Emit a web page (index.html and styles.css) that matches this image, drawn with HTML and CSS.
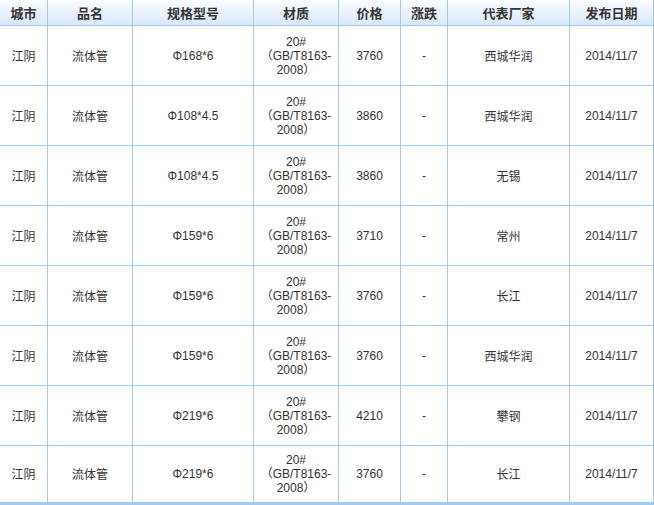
FILE: index.html
```html
<!DOCTYPE html>
<html lang="zh">
<head>
<meta charset="utf-8">
<title>流体管价格</title>
<link rel="stylesheet" href="styles.css">
</head>
<body>
<table class="price-table">
  <colgroup>
    <col class="c-city"><col class="c-name"><col class="c-spec"><col class="c-mat">
    <col class="c-price"><col class="c-chg"><col class="c-maker"><col class="c-date">
  </colgroup>
  <thead>
    <tr class="head-row">
      <th>城市</th><th>品名</th><th>规格型号</th><th>材质</th><th>价格</th><th>涨跌</th><th>代表厂家</th><th>发布日期</th>
    </tr>
  </thead>
  <tbody>
    <tr><td>江阴</td><td>流体管</td><td class="num">Φ168*6</td><td class="num mat">20#<br>（GB/T8163-<br>2008）</td><td class="num">3760</td><td class="num">-</td><td>西城华润</td><td class="num">2014/11/7</td></tr>
    <tr><td>江阴</td><td>流体管</td><td class="num">Φ108*4.5</td><td class="num mat">20#<br>（GB/T8163-<br>2008）</td><td class="num">3860</td><td class="num">-</td><td>西城华润</td><td class="num">2014/11/7</td></tr>
    <tr><td>江阴</td><td>流体管</td><td class="num">Φ108*4.5</td><td class="num mat">20#<br>（GB/T8163-<br>2008）</td><td class="num">3860</td><td class="num">-</td><td>无锡</td><td class="num">2014/11/7</td></tr>
    <tr><td>江阴</td><td>流体管</td><td class="num">Φ159*6</td><td class="num mat">20#<br>（GB/T8163-<br>2008）</td><td class="num">3710</td><td class="num">-</td><td>常州</td><td class="num">2014/11/7</td></tr>
    <tr><td>江阴</td><td>流体管</td><td class="num">Φ159*6</td><td class="num mat">20#<br>（GB/T8163-<br>2008）</td><td class="num">3760</td><td class="num">-</td><td>长江</td><td class="num">2014/11/7</td></tr>
    <tr><td>江阴</td><td>流体管</td><td class="num">Φ159*6</td><td class="num mat">20#<br>（GB/T8163-<br>2008）</td><td class="num">3760</td><td class="num">-</td><td>西城华润</td><td class="num">2014/11/7</td></tr>
    <tr><td>江阴</td><td>流体管</td><td class="num">Φ219*6</td><td class="num mat">20#<br>（GB/T8163-<br>2008）</td><td class="num">4210</td><td class="num">-</td><td>攀钢</td><td class="num">2014/11/7</td></tr>
    <tr class="last"><td>江阴</td><td>流体管</td><td class="num">Φ219*6</td><td class="num mat">20#<br>（GB/T8163-<br>2008）</td><td class="num">3760</td><td class="num">-</td><td>长江</td><td class="num">2014/11/7</td></tr>
  </tbody>
</table>
</body>
</html>
```
FILE: styles.css
```css
html, body {
  margin: 0;
  padding: 0;
  background: #ffffff;
}

.price-table {
  width: 654px;
  table-layout: fixed;
  border-collapse: separate;
  border-spacing: 0;
  font-family: "Liberation Sans", "Noto Sans CJK SC", sans-serif;
  font-size: 12px;
  color: #333333;
  border-bottom: 2px solid #9dcbf5;
}

.c-city { width: 48px; }
.c-name { width: 85px; }
.c-spec { width: 121px; }
.c-mat { width: 85px; }
.c-price { width: 62px; }
.c-chg { width: 47px; }
.c-maker { width: 122px; }
.c-date { width: 84px; }

.price-table th,
.price-table td {
  box-sizing: border-box;
  border-right: 1px solid #9dcbf5;
  border-bottom: 1px solid #9dcbf5;
  padding: 0;
  text-align: center;
  vertical-align: middle;
}

.head-row th {
  height: 26px;
  font-family: "Noto Sans CJK SC", sans-serif;
  font-size: 13px;
  font-weight: bold;
  color: #333333;
  background: linear-gradient(#fbfdff, #d9e7fb);
  line-height: 16px;
}

.price-table td {
  height: 60px;
  font-family: "Noto Sans CJK SC", sans-serif;
  font-size: 12px;
  line-height: 14px;
}

.price-table td.num {
  font-family: "Liberation Sans", "Noto Sans CJK SC", sans-serif;
  font-size: 12px;
}

.price-table td.mat {
  line-height: 14px;
}

.price-table tr.last td {
  height: 57px;
}
```
